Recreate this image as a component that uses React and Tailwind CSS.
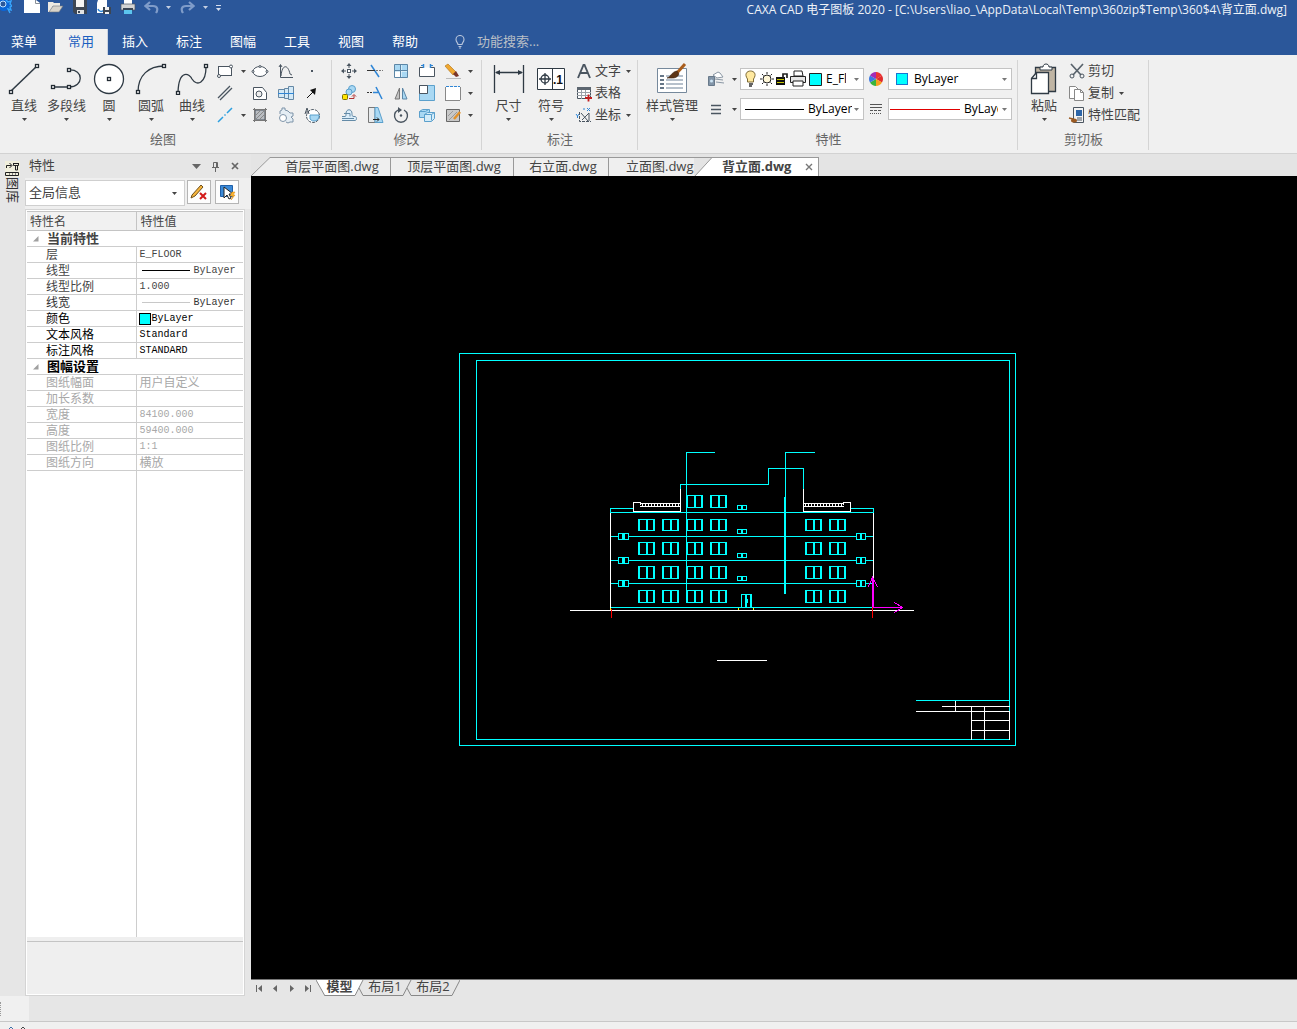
import React from "react";

const D = "#4a5560";
const L = "#a9d8f3";
const B = "#2f86d6";

function Ic({ children, s = 18 }) {
  return (
    <svg width={s} height={s} viewBox={`0 0 ${s} ${s}`} fill="none" stroke={D} strokeWidth="1" className="shrink-0" aria-hidden="true">
      {children}
    </svg>
  );
}

function Arrow({ color = "#444" }) {
  return (
    <svg width="5" height="3" viewBox="0 0 5 3" className="shrink-0" aria-hidden="true">
      <path d="M0 0h5L2.5 3z" fill={color} />
    </svg>
  );
}

function Node({ x, y }) {
  return <rect x={x - 1.5} y={y - 1.5} width="3" height="3" fill="#fff" stroke="#222b33" />;
}

function Big({ label, className, children, menu = true }) {
  return (
    <button type="button" className={`flex shrink-0 flex-col items-center pt-[3px] ${className}`}>
      <svg width="34" height="32" viewBox="0 0 34 32" fill="none" stroke="#2f3a44" strokeWidth="1.3" aria-hidden="true">{children}</svg>
      <span className="whitespace-nowrap text-[13px] leading-5">{label}</span>
      <span className="flex h-2 items-center">{menu && <Arrow />}</span>
    </button>
  );
}

function Tool({ name, children }) {
  return (
    <button type="button" aria-label={name} className="flex h-[22px] w-[26px] items-center justify-center">
      <Ic>{children}</Ic>
    </button>
  );
}

function Drop({ name }) {
  return (
    <button type="button" aria-label={name} className="flex h-[22px] w-2 items-center justify-center">
      <Arrow />
    </button>
  );
}

function Row({ label, menu, children }) {
  return (
    <button type="button" className="flex h-[22px] items-center">
      <span className="mr-[2px] flex w-[18px] justify-center"><Ic>{children}</Ic></span>
      <span className="pb-[2px] whitespace-nowrap text-[13px] leading-5">{label}</span>
      {menu && <span className="ml-[5px]"><Arrow /></span>}
    </button>
  );
}

function Group({ label, className, children }) {
  return (
    <section aria-label={label} className={`flex shrink-0 flex-col border-r border-[#d4d4d4] ${className}`}>
      <div className="flex h-[70px] items-start">{children}</div>
      <h2 className="pb-px text-center text-[13px] leading-[19px] text-[#666]">{label}</h2>
    </section>
  );
}

function QuickIcon({ name, className, children }) {
  return (
    <button type="button" aria-label={name} className={className}>
      <svg width="16" height="15" viewBox="0 0 16 15" fill="none" aria-hidden="true">{children}</svg>
    </button>
  );
}

function TitleBar() {
  return (
    <header className="flex h-[29px] shrink-0 items-start overflow-hidden text-white">
      <svg width="12" height="14" viewBox="0 0 12 14" className="mr-3" aria-hidden="true">
        <circle cx="4" cy="5" r="6" fill="#0a66d8" />
        <circle cx="3" cy="4" r="3" fill="#2b579a" stroke="#bfe1ff" />
        <path d="M6 0l2 2 3-1-1 3 2 2-2 1 1 3-3-1 2 4" fill="none" stroke="#35a5ff" strokeWidth="1.4" />
      </svg>
      <div className="flex items-center">
        <QuickIcon name="新建" className="mr-2"><path d="M0 0h12l4 3v10H0z" fill="#fff" /><path d="M11.500 0v3.500H16" stroke="#8a9097" /></QuickIcon>
        <QuickIcon name="打开" className="mr-2"><path d="M0 2h5l1 1h6v3H5l-3 6H0z" fill="#eeeae2" /><path d="M5 6h10l-4 6H1z" fill="#d9d4ca" stroke="#6d747d" strokeWidth=".6" /></QuickIcon>
        <QuickIcon name="保存" className="mr-2"><path d="M1 0h14v14H3l-2-2z" fill="#3c4654" /><path d="M4 0h8v7H4z" fill="#f4f4f4" /><path d="M5 10h7v4H5z" fill="#e3e3e3" /><path d="M6 11h2v2H6z" fill="#3c4654" /></QuickIcon>
        <QuickIcon name="另存为" className="mr-2"><path d="M2 0h9v7H8v6H1V3z" fill="#fff" /><path d="M2 9c1 3 4 3 6 1" stroke="#2f86d6" strokeWidth="1.5" /><path d="M7 7h8v7H7z" fill="#3c4654" /><path d="M9 7h4v3H9zM9 12h4v2H9z" fill="#f1f1f1" /></QuickIcon>
        <QuickIcon name="打印" className="mr-2"><path d="M4 0h8v4H4z" fill="#fff" /><path d="M1 4h14v6H1z" fill="#d4d4d4" stroke="#4a5560" strokeWidth=".7" /><path d="M3 8h10v2H3z" fill="#3c4654" /><path d="M4 10h8v4H4z" fill="#5cc5ee" /></QuickIcon>
        <QuickIcon name="撤销" className="mr-[6px]"><path d="M6 2L1.500 6 6 10M2 6h7c5 0 5 4 3 7" stroke="#7f9cc9" strokeWidth="2.200" /></QuickIcon>
        <Arrow color="#c4cfe2" />
        <QuickIcon name="重做" className="mr-2 ml-2"><path d="M10 2l4.500 4L10 10M14 6H7c-5 0-5 4-3 7" stroke="#7f9cc9" strokeWidth="2.200" /></QuickIcon>
        <Arrow color="#c4cfe2" />
        <button type="button" aria-label="自定义快速访问工具栏" className="ml-2 flex flex-col items-center gap-[2px]">
          <span className="h-px w-[5px] bg-[#d5dded]" />
          <Arrow color="#d5dded" />
        </button>
      </div>
      <h1 className="ml-auto pr-[10px] text-[12px] leading-5 whitespace-nowrap text-[#eef2f8]">
        CAXA CAD 电子图板 2020 - [C:\Users\liao_\AppData\Local\Temp\360zip$Temp\360$4\背立面.dwg]
      </h1>
    </header>
  );
}

const MENUS = ["插入", "标注", "图幅", "工具", "视图", "帮助"];

function MenuTabs() {
  return (
    <nav className="flex h-[26px] shrink-0 text-[13px] leading-6 text-white">
      <button type="button" className="w-[55px] pr-[7px] pb-[2px]">菜单</button>
      <button type="button" className="w-[53px] border-r border-[#c9d2e0] bg-[#f0f0f0] pb-[2px] text-[#1a5fc0]">常用</button>
      {MENUS.map((m) => (
        <button key={m} type="button" className="w-[54px] pb-[2px]">{m}</button>
      ))}
      <label className="ml-[22px] flex items-center pb-px">
        <svg width="12" height="14" viewBox="0 0 12 14" fill="none" stroke="#b9c6dc" strokeWidth="1.100" aria-hidden="true">
          <path d="M4 9.500C4 8 2 7 2 4.500a4 4 0 0 1 8 0C10 7 8 8 8 9.500zM4.500 11.500h3M5 13h2" />
        </svg>
        <input aria-label="功能搜索" placeholder="功能搜索..." className="ml-[11px] w-24 bg-transparent pb-px outline-none placeholder:text-[#b9bfc6]" />
      </label>
    </nav>
  );
}

function DrawGroup() {
  return (
    <Group label="绘图" className="w-[332px] pr-2 pl-[3px]">
      <Big label="直线" className="w-[42px]"><path d="M4 28L30 3" strokeWidth="1.600" /><Node x={4} y={29} /><Node x={30} y={3} /></Big>
      <Big label="多段线" className="w-[43px]"><path d="M3 24h15M19 7c15-1 15 17 0 17" /><Node x={3} y={24} /><Node x={19} y={24} /><Node x={19} y={7} /></Big>
      <Big label="圆" className="w-[42px]"><circle cx="17" cy="16" r="14.500" fill="#fff" /><Node x={17} y={16} /></Big>
      <Big label="圆弧" className="w-[42px]"><path d="M4 29C4 12 15 3 30 3" /><Node x={4} y={29} /><Node x={30} y={3} /></Big>
      <Big label="曲线" className="w-[40px]"><path d="M3 29C4 5 15 11 17 16c5 8 14 4 14-12" /><Node x={3} y={30} /><Node x={31} y={3} /></Big>
      <div className="grid shrink-0 grid-cols-[26px_9px_26px_26px_26px] items-center">
        <Tool name="矩形"><rect x="2.500" y="4.500" width="13" height="9" fill="#fff" /><circle cx="3" cy="14" r="1.500" fill="#fff" /><circle cx="15" cy="4.500" r="1.500" fill="#fff" /></Tool>
        <span className="flex justify-end"><Drop name="矩形选项" /></span>
        <Tool name="椭圆"><ellipse cx="9" cy="9.500" rx="7" ry="5" fill="#fff" /><circle cx="9" cy="4.500" r="1" fill="#fff" /><circle cx="2" cy="9.500" r="1" fill="#fff" /><circle cx="16" cy="9.500" r="1" fill="#fff" /></Tool>
        <Tool name="公式曲线"><path d="M3.500 3v12.500H16M2 5l1.500-2.500L5 5" /><path d="M4 14c1-12 7-12 9-2l2 1" /></Tool>
        <Tool name="点"><rect x="8" y="8" width="2" height="2" fill={D} stroke="none" /></Tool>
        <Tool name="平行线"><path d="M2 14L14 2M4 16L16 4" strokeWidth="1.300" /></Tool>
        <span />
        <Tool name="正多边形"><path d="M2.500 3.500h9l4 5v7h-13z" fill="#fff" /><circle cx="8" cy="10" r="3" fill="#eee" /></Tool>
        <Tool name="孔轴"><path d="M1.500 5.500h6v8h-6zM7.500 4.500h4v10h-4zM11.500 2.500h5v13h-5z" fill="#d3e9f7" stroke="#6588a5" /><path d="M1 9.500h16" stroke={B} /></Tool>
        <Tool name="箭头"><path d="M4 14l6-6" stroke="#111" /><path d="M13 4l-1 7-5-5z" fill="#111" stroke="none" /></Tool>
        <Tool name="中心线"><path d="M2 16l5-5M8.500 9.500l1-1M11 7l5-5" stroke="#2b9fe0" strokeWidth="1.500" /></Tool>
        <span className="flex justify-end"><Drop name="中心线选项" /></span>
        <Tool name="填充"><path d="M4 4h10v10H4z" fill="#b9bdc2" /><path d="M2 3.500h14M2 14.500h14M3.500 2v14M14.500 2v14" stroke="#777" /><path d="M4 10l6-6M4 14L14 4M8 14l6-6" stroke="#888" /></Tool>
        <Tool name="齿轮"><path d="M3 8V5l2-1V2h3v2l3 1 2 2h3v3l-2 1 2 2v3h-3l-2 1-2-1" fill="#e4edf4" stroke="#7d93a8" /><circle cx="6" cy="12" r="3.500" fill="#fff" stroke="#7d93a8" /></Tool>
        <Tool name="局部放大"><circle cx="10" cy="10" r="6.500" fill="#fff" strokeDasharray="3 1" /><path d="M7 9h9v2a5 5 0 0 1-9 2z" fill={L} stroke="#5ba0cc" /><path d="M2 8l2-6 2 6M3 6h3" /></Tool>
      </div>
    </Group>
  );
}

function ModifyGroup() {
  return (
    <Group label="修改" className="w-[150px] pr-1 pl-1">
      <div className="grid shrink-0 grid-cols-[26px_26px_26px_26px_26px_8px]">
        <Tool name="平移"><path d="M9 2v4M9 12v4M2 9h4M12 9h4" /><path d="M9 1l2.500 3h-5zM9 17l2.500-3h-5zM1 9l3-2.500v5zM17 9l-3-2.500v5z" fill={D} stroke="none" /><rect x="7.500" y="7.500" width="3" height="3" fill="#fff" /></Tool>
        <Tool name="裁剪"><path d="M5 3l8 12" stroke={B} strokeWidth="1.500" /><path d="M1 8.500h8" stroke="#333" /><path d="M10 8.500h7" stroke="#777" strokeDasharray="2 1" /></Tool>
        <Tool name="阵列"><path d="M2.500 2.500h13v13h-13z" fill={L} stroke="#5c86a6" /><path d="M3 10h5v5H3z" fill="#fff" stroke="none" /><path d="M9 3v12M3 9h12" stroke="#fff" /><path d="M8.500 3v12M3 8.500h12" stroke="#5c86a6" /></Tool>
        <Tool name="打断"><path d="M5 5.500H1.500v9h15v-9H13" fill="#fff" /><path d="M5.500 2v4M12.500 2v4" stroke={B} strokeWidth="1.500" /><path d="M3 3.500h3M12 3.500h3" stroke={B} /></Tool>
        <Tool name="删除"><path d="M1 4l3-2 8 8-3 3z" fill="#f0a830" stroke="#b77b20" strokeWidth=".7" /><path d="M9 12l3-3 3 5-3 1z" fill="#7a3528" stroke="none" /><path d="M2 16.500h15" stroke="#bbb" /></Tool>
        <Drop name="删除选项" />
        <Tool name="复制选择"><circle cx="12" cy="5" r="3.500" fill={L} stroke="#5ba0cc" /><circle cx="9" cy="8" r="3" fill={L} stroke="#5ba0cc" /><rect x="2.500" y="10.500" width="5" height="5" rx="1" fill="#ffe500" stroke="#7d7000" /><path d="M9 14.500h5v-3m-2 1l2-2 2 2" stroke="#b03030" /></Tool>
        <Tool name="延伸"><path d="M10 3l6 12" stroke={B} strokeWidth="1.500" /><path d="M1 8.500h5" stroke="#333" strokeDasharray="2 1" /><path d="M7 8.500h5" stroke={B} strokeWidth="1.500" /></Tool>
        <Tool name="镜像"><path d="M7.500 4v11H3z" fill="#c4c4c4" stroke="#777" /><path d="M10.500 4v11H15z" fill={L} stroke="#5c86a6" /></Tool>
        <Tool name="缩放"><path d="M1.500 1.500h15v15h-15z" fill={L} stroke="#5ba0cc" /><path d="M1.500 1.500h8v8h-8z" fill="#fff" /></Tool>
        <Tool name="分解"><path d="M2 3h14v13H2z" fill="#fff" stroke="none" /><path d="M1.500 3v13M1 16.500h15M16.500 3v13" stroke="#888" /><path d="M2 2.500h14" stroke={B} strokeDasharray="3 1" /></Tool>
        <Drop name="分解选项" />
        <Tool name="等距线"><path d="M2 10.500h3c1 0 1-1 1-3 0-5 6-5 6 0 0 2 0 3 2 3h1c2 0 2 4 0 4H2" fill="#dceefa" stroke="#648ba7" /><path d="M4 7.500h6v3M2 12.500h12" stroke="#648ba7" /></Tool>
        <Tool name="拉伸"><path d="M2.500 1.500H9v15H2.500z" fill="#e7eaec" stroke="#777" /><path d="M9 1.500h3l5 15H9z" fill={L} stroke="#5ba0cc" /><path d="M7 13.500h6m-2-2l2 2-2 2" stroke="#222" /></Tool>
        <Tool name="旋转"><path d="M6 4a6.500 6.500 0 1 0 6 0" strokeWidth="1.400" /><path d="M6 1v6l4-3z" fill={D} stroke="none" /><circle cx="9" cy="9.500" r="1.200" fill={D} stroke="none" /></Tool>
        <Tool name="块"><path d="M1.500 5.500l3-2h7v6l-3 2h-7z" fill={L} stroke="#5ba0cc" /><path d="M6.500 8.500l3-2h7v6l-3 3h-7z" fill="#d4ecf9" stroke="#5ba0cc" /><path d="M6.500 8.500h7v6m0-6l3-2M1.500 5.500h6l3-2" stroke="#5ba0cc" /></Tool>
        <Tool name="填充编辑"><path d="M2.500 3.500h13v12h-13z" fill="#c8c8c8" stroke="#666" /><path d="M4 10l5-5M5 14l8-8" stroke="#999" /><path d="M16 6l-6 7" stroke="#e1912a" strokeWidth="2.500" /></Tool>
        <Drop name="填充编辑选项" />
      </div>
    </Group>
  );
}

function NoteGroup() {
  return (
    <Group label="标注" className="w-[156px] pr-1 pl-[5px]">
      <Big label="尺寸" className="w-[43px]"><path d="M2.500 2v28M31.500 2v28M4 9.500h26" /><path d="M3 9.500l5-2.500v5zM31 9.500L26 7v5z" fill="#2f3a44" stroke="none" /></Big>
      <Big label="符号" className="w-[42px]">
        <path d="M3.500 5.500h27v21h-27zM18.500 5v22" fill="#fff" strokeWidth="1" />
        <circle cx="11" cy="16" r="4" /><path d="M5 16h12M11 10v12" />
        <text x="19" y="21" fill="#111" stroke="none" fontSize="12" fontWeight="bold" fontFamily="Liberation Sans">.1</text>
      </Big>
      <div className="flex flex-col items-start pl-[3px]">
        <Row label="文字" menu><path d="M3 16L8.500 3h1L15 16M5.500 11h7" strokeWidth="1.900" /></Row>
        <Row label="表格"><path d="M2.500 3.500h13v11h-13z" fill="#fff" /><path d="M2 3h14v3H2z" fill="#5c6670" stroke="none" /><path d="M2 8.500h14M2 11.500h14M6.500 6v9M10.500 6v9" stroke="#9aa1a8" /><path d="M10 14h7M13.500 10.500v7" stroke="#c32020" strokeWidth="1.800" /></Row>
        <Row label="坐标" menu><path d="M4.500 6v9.500H16" strokeDasharray="3 1" /><path d="M6 7l7 8M7 14l7-7v8" /><path d="M12 2l3 3m0-3l-3 3M8 3h2M1 8l1.500 2L4 8M2.500 10v2" stroke={B} /></Row>
      </div>
    </Group>
  );
}

function Combo({ label, value, children, selectClass }) {
  return (
    <div className="flex h-[22px] w-[124px] items-center border border-[#c3c3c3] bg-white pr-1 pl-1">
      {children}
      <select aria-label={label} className={`appearance-none overflow-hidden bg-transparent text-[12px] leading-5 text-black outline-none ${selectClass}`}>
        <option>{value}</option>
      </select>
      <span className="ml-auto"><Arrow color="#777" /></span>
    </div>
  );
}

function PropsGroup() {
  return (
    <Group label="特性" className="w-[380px] pr-1 pl-[6px]">
      <Big label="样式管理" className="w-[56px]">
        <path d="M2.500 5.500h29v24h-29z" fill="#fff" stroke="#76899c" strokeWidth="1" />
        <path d="M5 13h4M5 17h4M5 21h4M5 25h4" stroke="#344a60" /><path d="M11 13h17M11 17h17M11 21h17M11 25h17" stroke="#9eacba" />
        <path d="M30 1l-9 10" stroke="#a95d1c" strokeWidth="3" /><path d="M22 8l2 3c-2 5-7 4-12 4 4-1 4-6 10-7z" fill="#5d3516" stroke="#3a2414" strokeWidth=".6" />
      </Big>
      <div className="flex flex-col gap-2 pt-2 pl-[3px]">
        <div className="flex items-center">
          <div className="flex w-[35px] items-center justify-between">
            <Tool name="图层"><path d="M6 5l5-3 2 1 3 4-6 1zM8 9l8 1M9 12l8 1" fill="#fff" stroke="#8a97a4" /><path d="M1.500 6.500h6v9h-6z" fill="#8295a8" stroke="#68798a" /><circle cx="4.500" cy="11" r="1.500" fill="#cfe6f5" stroke="none" /></Tool>
            <Drop name="图层选项" />
          </div>
          <div className="pl-[2px]">
            <Combo label="图层" value="E_Floor" selectClass="ml-[3px] w-5">
              <svg width="78" height="20" viewBox="0 0 78 20" fill="none" stroke="#222" className="shrink-0" aria-hidden="true">
                <path d="M2.500 10C-1 5 2 2 5.500 2S12 5 8.500 10v3h-6z" fill="#ffe9a0" stroke="#7d6a36" /><path d="M4 15h4M4 17h3" stroke="#333" strokeWidth="1.500" />
                <circle cx="22" cy="10" r="4" fill="#fff7d8" /><path d="M22 3v2M22 15v2M15 10h2M27 10h2M17 5l1.500 1.500M25.500 13.500L27 15M17 15l1.500-1.500M25.500 6.500L27 5" />
                <path d="M31 8h9v8h-9z" fill="#111" stroke="none" /><path d="M32 10.500h7M32 13.500h7" stroke="#c7c700" /><path d="M38 9V5h4v4" strokeWidth="1.700" />
                <path d="M49 2h8l1 5h-9z" fill="#fff" /><path d="M45.500 7.500h15v6h-15z" fill="#e6e6e6" /><path d="M48 12h10v5H48z" fill="#fff" />
                <path d="M64.500 4.500h12v12h-12z" fill="#0ff" />
              </svg>
            </Combo>
          </div>
          <svg width="24" height="14" viewBox="0 0 24 14" aria-hidden="true">
            <path d="M12 7V0a7 7 0 0 1 6 3.500z" fill="#e33" /><path d="M12 7l6-3.500a7 7 0 0 1 0 7z" fill="#e12b2b" /><path d="M12 7l6 3.500A7 7 0 0 1 12 14z" fill="#f6a11d" />
            <path d="M12 7v7a7 7 0 0 1-6-3.500z" fill="#38b43b" /><path d="M12 7l-6 3.500a7 7 0 0 1 0-7z" fill="#3b78e0" /><path d="M12 7L6 3.500A7 7 0 0 1 12 0z" fill="#a32cb5" />
          </svg>
          <Combo label="颜色" value="ByLayer" selectClass="ml-[6px] w-16">
            <span className="ml-[3px] h-3 w-3 border border-[#1976d2] bg-[#00ffff]" />
          </Combo>
        </div>
        <div className="flex items-center">
          <div className="flex w-[35px] items-center justify-between">
            <Tool name="线型"><path d="M4 5.500h10M4 9.500h10M4 13.500h10" strokeWidth="1.300" /></Tool>
            <Drop name="线型选项" />
          </div>
          <div className="pl-[2px]">
            <Combo label="线型" value="ByLayer" selectClass="ml-1 w-11"><span className="h-px w-[59px] bg-black" /></Combo>
          </div>
          <svg width="24" height="14" viewBox="0 0 24 14" fill="none" stroke="#555" aria-hidden="true">
            <path d="M6 2.500h12M6 5.500h12" /><path d="M6 8.500h12" strokeDasharray="3 1" /><path d="M6 11.500h12" strokeDasharray="1 1" />
          </svg>
          <Combo label="线宽" value="ByLayer" selectClass="ml-1 w-[34px]"><span className="-ml-[3px] h-px w-[70px] shrink-0 bg-[#e00000]" /></Combo>
        </div>
      </div>
    </Group>
  );
}

function ClipGroup() {
  return (
    <Group label="剪切板" className="w-[131px] pr-1 pl-[5px]">
      <Big label="粘贴" className="w-[42px]">
        <path d="M8.500 4.500h20v24h-20z" fill="#c0b5a4" /><path d="M13 7V4h3c0-4 6-4 6 0h3v3z" fill="#fff" strokeWidth="1" />
        <path d="M4.500 15.500l5-6h12v21h-17z" fill="#fff" /><path d="M4.500 15.500h5v-6" />
      </Big>
      <div className="flex flex-col items-start pl-[3px]">
        <Row label="剪切"><path d="M3 2l10 11M15 2L5 13" stroke="#59636c" strokeWidth="1.700" /><circle cx="4" cy="14" r="2" /><circle cx="14" cy="14" r="2" /></Row>
        <Row label="复制" menu><path d="M1.500 2.500h6l3 3v9h-9z" fill="#fff" stroke="#888" /><path d="M6.500 5.500h6l3 3v8h-9z" fill="#fff" stroke="#888" /><path d="M12.500 5.500v3h3" stroke="#888" /></Row>
        <Row label="特性匹配"><path d="M5.500 1.500h10v15h-10z" fill="#f3f3f3" /><path d="M8 4h6v6H8z" fill="#2c65a8" stroke="none" /><path d="M9 12h5M9 14h5" /><path d="M1 12l4 1" stroke="#9b5a22" strokeWidth="1.500" /><ellipse cx="6" cy="14.500" rx="3" ry="2" fill="#9b5a22" stroke="none" /></Row>
      </div>
    </Group>
  );
}

const ROWS = [
  { head: "当前特性", tone: "text-[#444]" },
  { n: "层", v: "E_FLOOR", tone: "text-[#444]" },
  { n: "线型", v: "ByLayer", tone: "text-[#444]", line: "bg-black" },
  { n: "线型比例", v: "1.000", tone: "text-[#444]" },
  { n: "线宽", v: "ByLayer", tone: "text-[#333]", line: "bg-[#c8c8c8]" },
  { n: "颜色", v: "ByLayer", tone: "text-black", swatch: true },
  { n: "文本风格", v: "Standard", tone: "text-black" },
  { n: "标注风格", v: "STANDARD", tone: "text-black" },
  { head: "图幅设置", tone: "text-black" },
  { n: "图纸幅面", v: "用户自定义", tone: "text-[#a8a8a8]" },
  { n: "加长系数", v: "", tone: "text-[#a8a8a8]" },
  { n: "宽度", v: "84100.000", tone: "text-[#a8a8a8]" },
  { n: "高度", v: "59400.000", tone: "text-[#a8a8a8]" },
  { n: "图纸比例", v: "1:1", tone: "text-[#a8a8a8]" },
  { n: "图纸方向", v: "横放", tone: "text-[#a8a8a8]" },
];

function Value({ row }) {
  const cjk = /[^\x00-\x7f]/.test(row.v);
  return (
    <div className="flex h-[15px] items-center">
      {row.line && <span className={`mr-1 ml-[2px] h-px w-12 ${row.line}`} />}
      {row.swatch && <span className="-ml-[1px] mr-[1px] h-3 w-3 border border-black bg-[#00ffff]" />}
      <span className={cjk ? "text-[12px]" : "font-['Liberation_Mono','Noto_Sans_CJK_SC',monospace] text-[10px]"}>{row.v}</span>
    </div>
  );
}

function PropertyPanel() {
  return (
    <aside className="flex w-[226px] shrink-0 flex-col bg-[#e6e6e6] text-[#444]">
      <div className="flex h-[24px] items-center pl-1 text-[13px]">
        <h2 className="mr-auto">特性</h2>
        <button type="button" aria-label="选项"><svg width="9" height="5" viewBox="0 0 9 5" aria-hidden="true"><path d="M0 0h9L4.500 5z" fill="#666" /></svg></button>
        <button type="button" aria-label="固定" className="mx-[10px]"><svg width="10" height="11" viewBox="0 0 10 11" fill="none" stroke="#666" aria-hidden="true"><path d="M2.500 6V1.500h4V6M1 6.500h7M4.500 7v4M5.500 1v5" /></svg></button>
        <button type="button" aria-label="关闭" className="mr-3"><svg width="8" height="8" viewBox="0 0 8 8" stroke="#666" strokeWidth="1.700" aria-hidden="true"><path d="M1 1l6 6M7 1L1 7" /></svg></button>
      </div>
      <div className="flex h-[31px] items-start bg-[#efefef] pt-[2px]">
        <div className="flex h-[26px] w-[160px] items-center border border-[#cfcfcf] bg-white pr-[7px] pl-[3px]">
          <select aria-label="选择对象" className="w-full appearance-none bg-transparent pb-px text-[13px] outline-none"><option>全局信息</option></select>
          <Arrow />
        </div>
        <button type="button" aria-label="取消选择" className="ml-[2px] flex h-6 w-6 items-center justify-center border border-[#b5b5b5] bg-[#fdfdfd]">
          <Ic><path d="M2 12l9-10 2 2-8 9-4 2z" fill="#f6b53c" stroke="#6d4e1c" /><path d="M10 10l6 6M16 10l-6 6" stroke="#d21919" strokeWidth="2" /></Ic>
        </button>
        <button type="button" aria-label="快速选择" className="ml-1 flex h-6 w-6 items-center justify-center border border-[#b5b5b5] bg-[#fdfdfd]">
          <Ic><path d="M2.500 2.500h12v11h-12z" fill="#3b8ad8" stroke="#1f5fa8" /><path d="M6 4v11l3-3 2 4 2-1-2-4h4z" fill="#fff" stroke="#222" /><path d="M14 9l-2 4h3l-2 4 4-5h-2l2-3z" fill="#ffb62e" stroke="#d28511" strokeWidth=".5" /></Ic>
        </button>
      </div>
      <div className="mr-[6px] flex flex-1 flex-col border border-[#d4d4d4] bg-white p-px">
        <div className="flex flex-1 flex-col border-b-4 border-[#efefef]">
          <table className="w-full table-fixed border-collapse text-[12px] leading-[15px]">
            <colgroup><col className="w-[109px]" /><col /></colgroup>
            <thead>
              <tr className="h-[19px] border-y border-[#c4c4c4] bg-[#f1f1f1] text-left">
                <th className="border-r border-[#c4c4c4] pl-[3px] font-normal">特性名</th>
                <th className="pl-1 font-normal">特性值</th>
              </tr>
            </thead>
            <tbody>
              {ROWS.map((r) =>
                r.head ? (
                  <tr key={r.head} className={`h-4 border-b border-[#cdcdcd] ${r.tone}`}>
                    <th colSpan={2} className="text-left font-bold">
                      <span className="flex h-[15px] items-center pl-[6px]">
                        <svg width="6" height="6" viewBox="0 0 6 6" className="mr-2" aria-hidden="true"><path d="M5.500 0v5.500H0z" fill="#a0a0a0" /></svg>
                        <span className="text-[13px]">{r.head}</span>
                      </span>
                    </th>
                  </tr>
                ) : (
                  <tr key={r.n} className={`h-4 border-b border-[#cdcdcd] ${r.tone}`}>
                    <td className="border-r border-[#cdcdcd] pl-[19px]">{r.n}</td>
                    <td className="pl-[3px]"><Value row={r} /></td>
                  </tr>
                )
              )}
            </tbody>
          </table>
          <div className="w-[110px] flex-1 border-r border-[#cdcdcd]" />
        </div>
        <div className="h-[53px] border-t border-[#c4c4c4] bg-[#efefef]" />
      </div>
    </aside>
  );
}

function DocTab({ label, className }) {
  return (
    <button type="button" className={`h-[19px] shrink-0 border-t border-r border-[#999] bg-[#efefef] pb-[2px] pl-1 leading-4 whitespace-nowrap ${className}`}>
      {label}
    </button>
  );
}

function DocTabs() {
  return (
    <div className="flex h-[22px] shrink-0 items-end bg-[#e4e4e4] text-[13px] text-[#444]">
      <svg width="19" height="19" viewBox="0 0 19 19" className="shrink-0" aria-hidden="true"><path d="M0 19L19 .500V19z" fill="#efefef" /><path d="M0 19L19 .500" stroke="#999" /></svg>
      <DocTab label="首层平面图.dwg" className="w-[121px]" />
      <DocTab label="顶层平面图.dwg" className="w-[123px]" />
      <DocTab label="右立面.dwg" className="w-[95px]" />
      <button type="button" className="h-[19px] w-[85px] shrink-0 border-t border-[#999] bg-[#efefef] pb-[2px] pl-[17px] text-left leading-4 whitespace-nowrap">立面图.dwg</button>
      <svg width="18" height="19" viewBox="0 0 18 19" className="shrink-0" aria-hidden="true">
        <path d="M1 19L18 .500V19z" fill="#fff" /><path d="M0 .500h18M1 19L18 .500" stroke="#999" />
      </svg>
      <div className="flex h-[19px] w-[107px] shrink-0 items-center border-t border-r border-[#999] bg-white">
        <button type="button" className="mr-auto pb-[2px] pl-[10px] font-bold leading-4 whitespace-nowrap">背立面.dwg</button>
        <button type="button" aria-label="关闭文件" className="mr-[5px]"><svg width="8" height="8" viewBox="0 0 8 8" stroke="#777" strokeWidth="1.400" aria-hidden="true"><path d="M1 1l6 6M7 1L1 7" /></svg></button>
      </div>
    </div>
  );
}

const C = "#00ffff";

function Win({ x, y, h }) {
  return (
    <path
      fill={C}
      fillRule="evenodd"
      d={`M${x} ${y}h17v${h}h-17zM${x + 2} ${y + 1}h6v${h - 2}h-6zM${x + 10} ${y + 1}h5v${h - 2}h-5z`}
    />
  );
}

function SmallWin({ x, y, w, h }) {
  const pane = Math.floor((w - 4) / 2);
  return (
    <path
      fill={C}
      fillRule="evenodd"
      d={`M${x} ${y}h${w}v${h}h${-w}zM${x + 1} ${y + 1}h${pane}v${h - 2}h${-pane}zM${x + w - 1 - pane} ${y + 1}h${pane}v${h - 2}h${-pane}z`}
    />
  );
}

const FLOORS = [[519, 12], [542, 13], [566, 13], [590, 13]];
const COLS = [638, 662, 686, 710, 805, 829];
const BALCONIES = [533, 557, 580];

function Drawing() {
  return (
    <svg className="h-full w-full" role="img" aria-label="背立面" shapeRendering="crispEdges" fill="none" stroke={C}>
      <g transform="translate(-250.5 -175.5)">
        <g strokeLinecap="square">
          <path d="M459 353h556v392H459zM476 360h533v379H476z" />
          <path d="M610 513V508h23M850 508h23v5M610 512h263M686 594V452h28M680 489v-5h88v-16h35v21M785 497V452h29" />
          <path d="M610 536h263M610 560h263M610 583h263M610 607h263M916 700h93" />
          <path d="M610 513v97M873 513v94M570 610h343M633 511v-9h7v2M633 511h47M680 489v22M803 489v22h47M850 511v-9h-7v2M717 660h49" stroke="#fff" />
          <path d="M640 503h40M640 506h40M804 503h39M804 506h39" stroke="#fff" />
          <path d="M955 701v10M942 706h67M916 711h93M971 706v33M984 706v33M971 720h38M971 730h38M1009 711v28" stroke="#fff" />
          <path d="M610 608v1M738 608v1M753 608v1" stroke="#ff0" />
          <path d="M611 609v8M872 607v10" stroke="#f00" />
          <path d="M872 606v-28M873 606v-28M873 607h29M868 586l4-9 5 9M894 602l8 5-8 5" stroke="#f0f" />
        </g>
        <path d="M641 504.500h39M804 504.500h39" stroke="#fff" strokeWidth="2" strokeDasharray="1 2" />
      </g>
      <g transform="translate(-251 -176)" stroke="none">
        <path d="M784 497h2v97h-2zM741 594h11v1h-11zM741 594h1v13h-1zM745 594h2v13h-2zM750 594h2v13h-2zM747 599h1v4h-1z" fill={C} />
        <Win x={686} y={495} h={13} />
        <Win x={710} y={495} h={13} />
        {FLOORS.map(([y, h]) => COLS.map((x) => <Win key={`${x}-${y}`} x={x} y={y} h={h} />))}
        {BALCONIES.map((y) => (
          <g key={y}>
            <path fill="#000" d={`M618 ${y}h11v7h-11zM856 ${y}h10v7h-10z`} />
            <SmallWin x={618} y={y} w={11} h={7} />
            <SmallWin x={856} y={y} w={10} h={7} />
          </g>
        ))}
        {[505, 529, 553, 576].map((y) => <SmallWin key={y} x={737} y={y} w={10} h={5} />)}
      </g>
    </svg>
  );
}

function NavArrow({ name, d }) {
  return (
    <button type="button" aria-label={name} className="flex w-4 justify-center">
      <svg width="8" height="7" viewBox="0 0 8 7" aria-hidden="true"><path d={d} fill="#666" /></svg>
    </button>
  );
}

function LayoutTabs() {
  return (
    <div className="flex h-[17px] shrink-0 items-center border-t border-[#777] bg-[#e6e6e6] pl-px text-[13px] leading-4 text-[#444]">
      <NavArrow name="第一个" d="M0 0h1v7H0zM6 0v7L2 3.500z" />
      <NavArrow name="上一个" d="M5 0v7L1 3.500z" />
      <NavArrow name="下一个" d="M2 0v7l4-3.500z" />
      <NavArrow name="最后一个" d="M1 0v7l4-3.500zM6 0h1v7H6z" />
      <svg width="9" height="16" viewBox="0 0 9 16" aria-hidden="true"><path d="M0 0h9v16z" fill="#fff" /><path d="M0 0l9 16" stroke="#888" /></svg>
      <button type="button" className="h-4 w-[29px] border-b border-[#888] bg-white pb-[3px] font-bold leading-3 whitespace-nowrap">模型</button>
      <svg width="14" height="16" viewBox="0 0 14 16" fill="none" aria-hidden="true"><path d="M0 0h9L1 16H0z" fill="#fff" /><path d="M0 15.500h1L9 0M5 8l4 7.500h5" stroke="#888" /></svg>
      <button type="button" className="h-4 w-[34px] border-b border-[#888] pb-[3px] leading-3 whitespace-nowrap">布局1</button>
      <svg width="14" height="16" viewBox="0 0 14 16" fill="none" aria-hidden="true"><path d="M0 15.500h1L9 0M5 8l4 7.500h5" stroke="#888" /></svg>
      <button type="button" className="h-4 w-[34px] border-b border-[#888] pb-[3px] leading-3 whitespace-nowrap">布局2</button>
      <svg width="10" height="16" viewBox="0 0 10 16" fill="none" aria-hidden="true"><path d="M0 15.500h2L10 0" stroke="#888" /></svg>
    </div>
  );
}

function SideStrip() {
  return (
    <div className="flex w-[25px] shrink-0 flex-col items-center bg-[#e6e6e6] pt-[7px]">
      <button type="button" className="flex flex-col items-center">
        <svg width="15" height="16" viewBox="0 0 15 16" fill="none" stroke="#222" aria-hidden="true">
          <path d="M0 0h15v16H0z" fill="#f1efdc" stroke="none" />
          <path d="M1.500 7V4.500h5M4.500 2l2.500 2.500L4.500 7M8 2.500h6M8.500 2v2.500h5V2M10.500 5v4h2V5M.500 11.500h13v3H.500zM4 13h1M7 13h1M10 13h1" />
        </svg>
        <span className="text-[13px] leading-[15px] text-[#333] [text-orientation:sideways] [writing-mode:vertical-rl]">图库</span>
      </button>
    </div>
  );
}

export default function App() {
  return (
    <div className="flex h-screen min-h-[600px] w-full flex-col overflow-hidden bg-[#e6e6e6] font-['Open_Sans','Noto_Sans_CJK_SC',sans-serif]">
      <div className="shrink-0 bg-[#2b579a]">
        <TitleBar />
        <MenuTabs />
      </div>
      <div className="flex h-[99px] shrink-0 items-start border-b border-[#d2d2d2] bg-[#f0f0f0] pt-[5px] text-[#444]">
        <DrawGroup />
        <ModifyGroup />
        <NoteGroup />
        <PropsGroup />
        <ClipGroup />
      </div>
      <div className="flex min-h-0 flex-1">
        <SideStrip />
        <PropertyPanel />
        <main className="flex min-w-0 flex-1 flex-col">
          <DocTabs />
          <div className="min-h-0 flex-1 overflow-hidden bg-black"><Drawing /></div>
          <LayoutTabs />
        </main>
      </div>
      <div className="flex h-[25px] shrink-0 items-center">
        <div className="flex h-full w-[29px] items-center bg-[#f0f0f0]">
          <span className="h-[14px] border-l border-dotted border-[#999]" />
        </div>
      </div>
      <footer className="flex h-2 shrink-0 items-end border-t border-[#c8c8c8] bg-[#f0f0f0] pl-2">
        <svg width="20" height="3" viewBox="0 0 20 3" fill="none" stroke="#3b6ea5" aria-hidden="true"><path d="M1 3l2-2 2 2" /><path d="M13 3l2-2 2 2" stroke="#444" /></svg>
      </footer>
    </div>
  );
}
